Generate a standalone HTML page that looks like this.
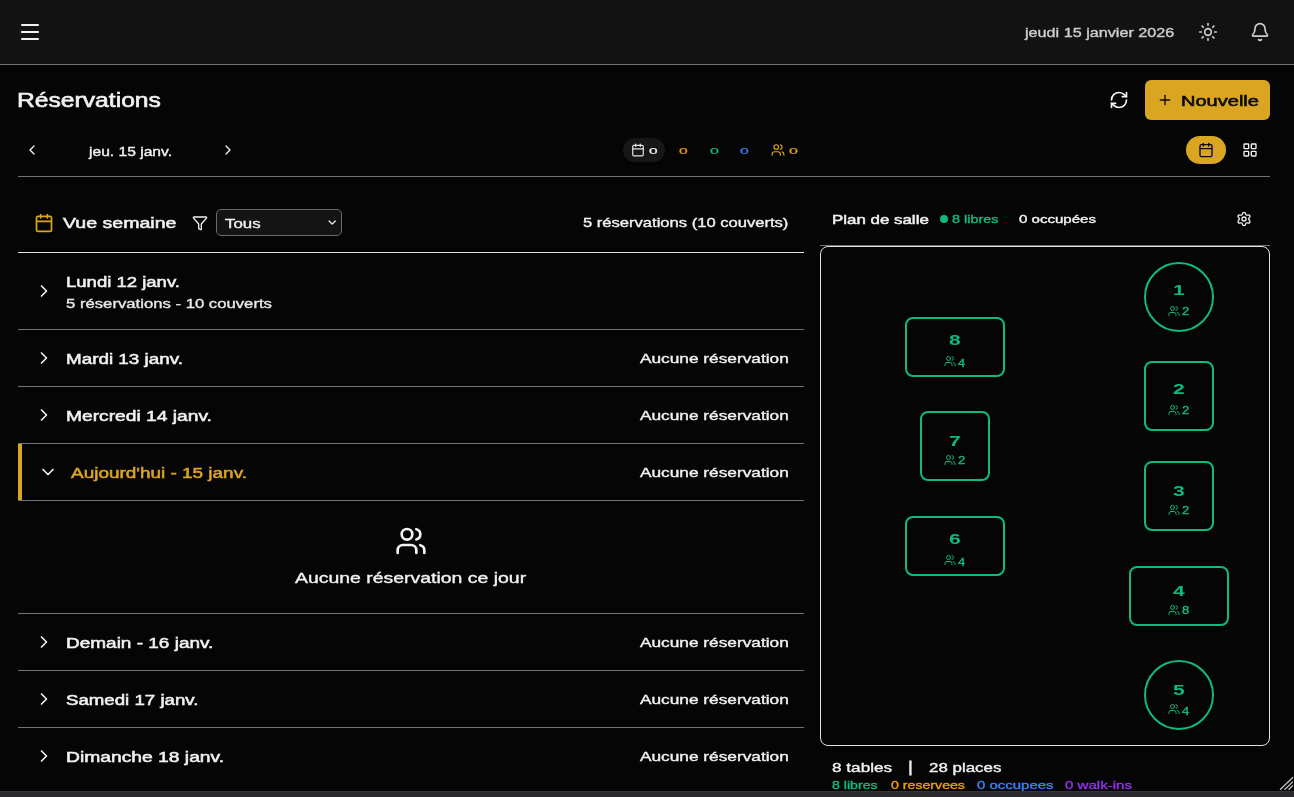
<!DOCTYPE html>
<html lang="fr"><head><meta charset="utf-8"><title>Réservations</title>
<style>html,body{margin:0;padding:0;background:#050505;}
body{width:1294px;height:797px;position:relative;overflow:hidden;font-family:"Liberation Sans", sans-serif;color:#f2f2f2;}
.layer{position:absolute;left:0;top:0;width:1294px;height:797px;margin:0;padding:0;will-change:transform;}
.ab,.t,.ic{position:absolute;}
.t{white-space:nowrap;line-height:1;display:block;transform-origin:0 50%;}
.hl{position:absolute;height:1px;background:#737373;}
.tb{position:absolute;box-sizing:border-box;border:2px solid #10B981;border-radius:8px;}
.tb.c{border-radius:50%;}
button,h1,h2,ul,li{all:unset;}
</style></head><body>
<header class="layer">
<div class="ab" style="left:0;top:0;width:1294px;height:64px;background:#121212"></div>
<div class="hl" style="left:0;top:64px;width:1294px;"></div>
<button><svg class="ic" style="left:18px;top:20px" width="24" height="24" viewBox="0 0 24 24" fill="none" stroke="#f2f2f2" stroke-width="2" stroke-linecap="round" stroke-linejoin="round"><path d="M4 5h16"/><path d="M4 12h16"/><path d="M4 19h16"/></svg></button>
<span class="t" id="hdate" style="font-size:13.5px;font-weight:400;color:#cecece;top:25.77px;left:1024.68px;transform:scaleX(1.1977);-webkit-text-stroke:0.38px #cecece;">jeudi 15 janvier 2026</span>
<button><svg class="ic" style="left:1198px;top:22px" width="20" height="20" viewBox="0 0 24 24" fill="none" stroke="#cfcfcf" stroke-width="2" stroke-linecap="round" stroke-linejoin="round"><circle cx="12" cy="12" r="4"/><path d="M12 2v2"/><path d="M12 20v2"/><path d="m4.93 4.93 1.41 1.41"/><path d="m17.66 17.66 1.41 1.41"/><path d="M2 12h2"/><path d="M20 12h2"/><path d="m6.34 17.66-1.41 1.41"/><path d="m19.07 4.93-1.41 1.41"/></svg></button>
<button><svg class="ic" style="left:1250px;top:22px" width="20" height="20" viewBox="0 0 24 24" fill="none" stroke="#cfcfcf" stroke-width="2" stroke-linecap="round" stroke-linejoin="round"><path d="M10.268 21a2 2 0 0 0 3.464 0"/><path d="M3.262 15.326A1 1 0 0 0 4 17h16a1 1 0 0 0 .74-1.673C19.41 13.956 18 12.499 18 8A6 6 0 0 0 6 8c0 4.499-1.411 5.956-2.738 7.326"/></svg></button>
</header>
<section class="layer">
<h1><span class="t" id="title" style="font-size:19.4px;font-weight:400;color:#f2f2f2;top:90.98px;left:17.16px;transform:scaleX(1.2718);-webkit-text-stroke:0.6px #f2f2f2;">Réservations</span></h1>
<button><svg class="ic" style="left:1109px;top:90px" width="20" height="20" viewBox="0 0 24 24" fill="none" stroke="#f2f2f2" stroke-width="2" stroke-linecap="round" stroke-linejoin="round"><path d="M3 12a9 9 0 0 1 9-9 9.75 9.75 0 0 1 6.74 2.74L21 8"/><path d="M21 3v5h-5"/><path d="M21 12a9 9 0 0 1-9 9 9.75 9.75 0 0 1-6.74-2.74L3 16"/><path d="M8 16H3v5"/></svg></button>
<button><div class="ab" style="left:1145px;top:80px;width:125px;height:40px;border-radius:6px;background:#DAA520"></div><svg class="ic" style="left:1157px;top:92px" width="16" height="16" viewBox="0 0 24 24" fill="none" stroke="#0a0a0a" stroke-width="2" stroke-linecap="round" stroke-linejoin="round"><path d="M5 12h14"/><path d="M12 5v14"/></svg><span class="t" id="nouv" style="font-size:15.5px;font-weight:400;color:#0a0a0a;top:92.68px;left:1180.74px;transform:scaleX(1.2924);-webkit-text-stroke:0.55px #0a0a0a;">Nouvelle</span></button>
</section>
<nav class="layer">
<button><svg class="ic" style="left:24px;top:142px" width="16" height="16" viewBox="0 0 24 24" fill="none" stroke="#f2f2f2" stroke-width="2" stroke-linecap="round" stroke-linejoin="round"><path d="m15 18-6-6 6-6"/></svg></button>
<span class="t" id="navd" style="font-size:13.5px;font-weight:400;color:#f2f2f2;top:145.37px;left:89.03px;transform:scaleX(1.1560);-webkit-text-stroke:0.38px #f2f2f2;">jeu. 15 janv.</span>
<button><svg class="ic" style="left:220px;top:142px" width="16" height="16" viewBox="0 0 24 24" fill="none" stroke="#f2f2f2" stroke-width="2" stroke-linecap="round" stroke-linejoin="round"><path d="m9 18 6-6-6-6"/></svg></button>
<div class="ab" style="left:623px;top:138px;width:42px;height:24px;border-radius:12px;background:#171717"></div>
<svg class="ic" style="left:631px;top:143px" width="14" height="14" viewBox="0 0 24 24" fill="none" stroke="#e6e6e6" stroke-width="2" stroke-linecap="round" stroke-linejoin="round"><path d="M8 2v4"/><path d="M16 2v4"/><rect width="18" height="18" x="3" y="4" rx="2"/><path d="M3 10h18"/></svg>
<span class="t" id="s0" style="font-size:8.5px;font-weight:400;color:#f2f2f2;top:147.10px;left:649.40px;transform:scaleX(1.8188);-webkit-text-stroke:0.2px #f2f2f2;">0</span>
<span class="t" id="s1" style="font-size:8.5px;font-weight:400;color:#F59E0B;top:147.10px;left:679.05px;transform:scaleX(1.8355);-webkit-text-stroke:0.2px #F59E0B;">0</span>
<span class="t" id="s2" style="font-size:8.5px;font-weight:400;color:#10B981;top:147.10px;left:709.62px;transform:scaleX(1.8813);-webkit-text-stroke:0.2px #10B981;">0</span>
<span class="t" id="s3" style="font-size:8.5px;font-weight:400;color:#3B82F6;top:147.10px;left:740.06px;transform:scaleX(1.8507);-webkit-text-stroke:0.2px #3B82F6;">0</span>
<svg class="ic" style="left:771px;top:143px" width="14" height="14" viewBox="0 0 24 24" fill="none" stroke="#DAA520" stroke-width="2" stroke-linecap="round" stroke-linejoin="round"><path d="M16 21v-2a4 4 0 0 0-4-4H6a4 4 0 0 0-4 4v2"/><path d="M16 3.128a4 4 0 0 1 0 7.744"/><path d="M22 21v-2a4 4 0 0 0-3-3.87"/><circle cx="9" cy="7" r="4"/></svg>
<span class="t" id="s4" style="font-size:8.5px;font-weight:400;color:#DAA520;top:147.10px;left:788.95px;transform:scaleX(1.8759);-webkit-text-stroke:0.2px #DAA520;">0</span>
<button><div class="ab" style="left:1186px;top:136px;width:40px;height:28px;border-radius:14px;background:#DAA520"></div><svg class="ic" style="left:1198px;top:142px" width="16" height="16" viewBox="0 0 24 24" fill="none" stroke="#0a0a0a" stroke-width="2" stroke-linecap="round" stroke-linejoin="round"><path d="M8 2v4"/><path d="M16 2v4"/><rect width="18" height="18" x="3" y="4" rx="2"/><path d="M3 10h18"/></svg></button>
<button><svg class="ic" style="left:1242px;top:142px" width="16" height="16" viewBox="0 0 24 24" fill="none" stroke="#f2f2f2" stroke-width="2" stroke-linecap="round" stroke-linejoin="round"><rect width="7" height="7" x="3" y="3" rx="1"/><rect width="7" height="7" x="14" y="3" rx="1"/><rect width="7" height="7" x="14" y="14" rx="1"/><rect width="7" height="7" x="3" y="14" rx="1"/></svg></button>
<div class="hl" style="left:18px;top:176px;width:1252px;"></div>
</nav>
<main class="layer">
<svg class="ic" style="left:34px;top:213px" width="20" height="20" viewBox="0 0 24 24" fill="none" stroke="#DAA520" stroke-width="2" stroke-linecap="round" stroke-linejoin="round"><path d="M8 2v4"/><path d="M16 2v4"/><rect width="18" height="18" x="3" y="4" rx="2"/><path d="M3 10h18"/></svg>
<h2><span class="t" id="vue" style="font-size:15.5px;font-weight:400;color:#f2f2f2;top:214.98px;left:63.10px;transform:scaleX(1.2624);-webkit-text-stroke:0.55px #f2f2f2;">Vue semaine</span></h2>
<svg class="ic" style="left:192px;top:215px" width="16" height="16" viewBox="0 0 24 24" fill="none" stroke="#f2f2f2" stroke-width="2" stroke-linecap="round" stroke-linejoin="round"><path d="M10 20a1 1 0 0 0 .553.895l2 1A1 1 0 0 0 14 21v-7a2 2 0 0 1 .517-1.341L21.74 4.67A1 1 0 0 0 21 3H3a1 1 0 0 0-.742 1.67l7.225 7.989A2 2 0 0 1 10 14z"/></svg>
<div class="ab" style="left:216px;top:209px;width:126px;height:27px;box-sizing:border-box;border:1px solid #6b6b6b;border-radius:5px;background:#141414"></div>
<span class="t" id="tous" style="font-size:13.5px;font-weight:400;color:#f2f2f2;top:216.67px;left:225.20px;transform:scaleX(1.2476);-webkit-text-stroke:0.35px #f2f2f2;">Tous</span>
<svg class="ic" style="left:327px;top:218px" width="10" height="10" viewBox="0 0 10 10" fill="none" stroke="#f2f2f2" stroke-width="1.3" stroke-linecap="round" stroke-linejoin="round"><path d="M2.1 3 5.2 6.1 8.3 3"/></svg>
<span class="t" id="cnt" style="font-size:13.5px;font-weight:400;color:#f2f2f2;top:215.87px;left:582.93px;transform:scaleX(1.2275);-webkit-text-stroke:0.38px #f2f2f2;">5 réservations (10 couverts)</span>
<div class="hl" style="left:18px;top:252px;width:786px;background:#e2e2e2"></div>
<ul>
<li><svg class="ic" style="left:34px;top:281px" width="20" height="20" viewBox="0 0 24 24" fill="none" stroke="#f2f2f2" stroke-width="2" stroke-linecap="round" stroke-linejoin="round"><path d="m9 18 6-6-6-6"/></svg><span class="t" id="d1" style="font-size:15.5px;font-weight:400;color:#f2f2f2;top:273.88px;left:65.86px;transform:scaleX(1.1947);-webkit-text-stroke:0.55px #f2f2f2;">Lundi 12 janv.</span><span class="t" id="d1s" style="font-size:13.5px;font-weight:400;color:#e8e8e8;top:296.57px;left:65.80px;transform:scaleX(1.2363);-webkit-text-stroke:0.38px #e8e8e8;">5 réservations - 10 couverts</span><div class="hl" style="left:18px;top:329px;width:786px;"></div></li>
<li><svg class="ic" style="left:34px;top:348px" width="20" height="20" viewBox="0 0 24 24" fill="none" stroke="#f2f2f2" stroke-width="2" stroke-linecap="round" stroke-linejoin="round"><path d="m9 18 6-6-6-6"/></svg><span class="t" id="d2" style="font-size:15.5px;font-weight:400;color:#f2f2f2;top:350.88px;left:65.83px;transform:scaleX(1.2152);-webkit-text-stroke:0.55px #f2f2f2;">Mardi 13 janv.</span><span class="t" id="none0" style="font-size:13.5px;font-weight:400;color:#f2f2f2;top:351.57px;left:639.50px;transform:scaleX(1.2788);-webkit-text-stroke:0.38px #f2f2f2;">Aucune réservation</span><div class="hl" style="left:18px;top:386px;width:786px;"></div></li>
<li><svg class="ic" style="left:34px;top:405px" width="20" height="20" viewBox="0 0 24 24" fill="none" stroke="#f2f2f2" stroke-width="2" stroke-linecap="round" stroke-linejoin="round"><path d="m9 18 6-6-6-6"/></svg><span class="t" id="d3" style="font-size:15.5px;font-weight:400;color:#f2f2f2;top:407.88px;left:65.79px;transform:scaleX(1.2394);-webkit-text-stroke:0.55px #f2f2f2;">Mercredi 14 janv.</span><span class="t" id="none1" style="font-size:13.5px;font-weight:400;color:#f2f2f2;top:408.57px;left:639.50px;transform:scaleX(1.2788);-webkit-text-stroke:0.38px #f2f2f2;">Aucune réservation</span><div class="hl" style="left:18px;top:443px;width:786px;"></div></li>
<li><div class="ab" style="left:18px;top:444px;width:4px;height:56px;background:#DAA520"></div><svg class="ic" style="left:38px;top:462px" width="20" height="20" viewBox="0 0 24 24" fill="none" stroke="#f2f2f2" stroke-width="2" stroke-linecap="round" stroke-linejoin="round"><path d="m6 9 6 6 6-6"/></svg><span class="t" id="d4" style="font-size:15.5px;font-weight:400;color:#DAA520;top:464.88px;left:70.80px;transform:scaleX(1.2221);-webkit-text-stroke:0.55px #DAA520;">Aujourd'hui - 15 janv.</span><span class="t" id="none2" style="font-size:13.5px;font-weight:400;color:#f2f2f2;top:465.57px;left:639.50px;transform:scaleX(1.2788);-webkit-text-stroke:0.38px #f2f2f2;">Aucune réservation</span><div class="hl" style="left:18px;top:500px;width:786px;"></div><svg class="ic" style="left:395px;top:525px" width="32" height="32" viewBox="0 0 24 24" fill="none" stroke="#f2f2f2" stroke-width="2" stroke-linecap="round" stroke-linejoin="round"><path d="M16 21v-2a4 4 0 0 0-4-4H6a4 4 0 0 0-4 4v2"/><path d="M16 3.128a4 4 0 0 1 0 7.744"/><path d="M22 21v-2a4 4 0 0 0-3-3.87"/><circle cx="9" cy="7" r="4"/></svg><span class="t" id="empty" style="font-size:15.5px;font-weight:400;color:#f2f2f2;top:569.68px;left:294.90px;transform:scaleX(1.2536);-webkit-text-stroke:0.38px #f2f2f2;">Aucune réservation ce jour</span><div class="hl" style="left:18px;top:613px;width:786px;"></div></li>
<li><svg class="ic" style="left:34px;top:632px" width="20" height="20" viewBox="0 0 24 24" fill="none" stroke="#f2f2f2" stroke-width="2" stroke-linecap="round" stroke-linejoin="round"><path d="m9 18 6-6-6-6"/></svg><span class="t" id="d5" style="font-size:15.5px;font-weight:400;color:#f2f2f2;top:634.88px;left:65.81px;transform:scaleX(1.2246);-webkit-text-stroke:0.55px #f2f2f2;">Demain - 16 janv.</span><span class="t" id="none3" style="font-size:13.5px;font-weight:400;color:#f2f2f2;top:635.57px;left:639.50px;transform:scaleX(1.2788);-webkit-text-stroke:0.38px #f2f2f2;">Aucune réservation</span><div class="hl" style="left:18px;top:670px;width:786px;"></div></li>
<li><svg class="ic" style="left:34px;top:689px" width="20" height="20" viewBox="0 0 24 24" fill="none" stroke="#f2f2f2" stroke-width="2" stroke-linecap="round" stroke-linejoin="round"><path d="m9 18 6-6-6-6"/></svg><span class="t" id="d6" style="font-size:15.5px;font-weight:400;color:#f2f2f2;top:691.88px;left:65.97px;transform:scaleX(1.2037);-webkit-text-stroke:0.55px #f2f2f2;">Samedi 17 janv.</span><span class="t" id="none4" style="font-size:13.5px;font-weight:400;color:#f2f2f2;top:692.57px;left:639.50px;transform:scaleX(1.2788);-webkit-text-stroke:0.38px #f2f2f2;">Aucune réservation</span><div class="hl" style="left:18px;top:727px;width:786px;"></div></li>
<li><svg class="ic" style="left:34px;top:746px" width="20" height="20" viewBox="0 0 24 24" fill="none" stroke="#f2f2f2" stroke-width="2" stroke-linecap="round" stroke-linejoin="round"><path d="m9 18 6-6-6-6"/></svg><span class="t" id="d7" style="font-size:15.5px;font-weight:400;color:#f2f2f2;top:748.88px;left:65.78px;transform:scaleX(1.2430);-webkit-text-stroke:0.55px #f2f2f2;">Dimanche 18 janv.</span><span class="t" id="none5" style="font-size:13.5px;font-weight:400;color:#f2f2f2;top:749.57px;left:639.50px;transform:scaleX(1.2788);-webkit-text-stroke:0.38px #f2f2f2;">Aucune réservation</span></li>
</ul>
</main>
<aside class="layer">
<h2><span class="t" id="plan" style="font-size:13.5px;font-weight:400;color:#f2f2f2;top:212.77px;left:831.54px;transform:scaleX(1.2520);-webkit-text-stroke:0.5px #f2f2f2;">Plan de salle</span></h2>
<div class="ab" style="left:940px;top:215px;width:8px;height:8px;border-radius:50%;background:#10B981"></div>
<span class="t" id="libres" style="font-size:11.6px;font-weight:400;color:#10B981;top:212.58px;left:952.26px;transform:scaleX(1.2414);-webkit-text-stroke:0.38px #10B981;">8 libres</span>
<span class="t" id="occ" style="font-size:11.6px;font-weight:400;color:#f2f2f2;top:212.58px;left:1018.73px;transform:scaleX(1.2977);-webkit-text-stroke:0.38px #f2f2f2;">0 occupées</span>
<button><svg class="ic" style="left:1236px;top:211px" width="16" height="16" viewBox="0 0 24 24" fill="none" stroke="#f2f2f2" stroke-width="2" stroke-linecap="round" stroke-linejoin="round"><path d="M9.671 4.136a2.34 2.34 0 0 1 4.659 0 2.34 2.34 0 0 0 3.319 1.915 2.34 2.34 0 0 1 2.33 4.033 2.34 2.34 0 0 0 0 3.831 2.34 2.34 0 0 1-2.33 4.033 2.34 2.34 0 0 0-3.319 1.915 2.34 2.34 0 0 1-4.659 0 2.34 2.34 0 0 0-3.32-1.915 2.34 2.34 0 0 1-2.33-4.033 2.34 2.34 0 0 0 0-3.831A2.34 2.34 0 0 1 6.35 6.051a2.34 2.34 0 0 0 3.319-1.915"/><circle cx="12" cy="12" r="3"/></svg></button>
<div class="hl" style="left:820px;top:245px;width:450px;"></div>
<div class="ab" style="left:820px;top:246px;width:450px;height:500px;box-sizing:border-box;border:1px solid #e2e2e2;border-radius:8px;"></div>
<div><div class="tb c" style="left:1144px;top:262px;width:70px;height:70px"></div><span class="t" id="tn1" style="font-size:14px;font-weight:700;color:#10B981;top:283.15px;left:1172.79px;transform:scaleX(1.5000);">1</span><svg class="ic" style="left:1167.5px;top:305.0px" width="12" height="12" viewBox="0 0 24 24" fill="none" stroke="#10B981" stroke-width="2" stroke-linecap="round" stroke-linejoin="round"><path d="M16 21v-2a4 4 0 0 0-4-4H6a4 4 0 0 0-4 4v2"/><path d="M16 3.128a4 4 0 0 1 0 7.744"/><path d="M22 21v-2a4 4 0 0 0-3-3.87"/><circle cx="9" cy="7" r="4"/></svg><span class="t" id="ts1" style="font-size:10px;font-weight:400;color:#10B981;top:306.84px;left:1181.97px;transform:scaleX(1.3000);-webkit-text-stroke:0.35px #10B981;">2</span></div>
<div><div class="tb" style="left:1144px;top:361px;width:70px;height:70px"></div><span class="t" id="tn2" style="font-size:14px;font-weight:700;color:#10B981;top:382.15px;left:1173.39px;transform:scaleX(1.5000);">2</span><svg class="ic" style="left:1167.5px;top:404.0px" width="12" height="12" viewBox="0 0 24 24" fill="none" stroke="#10B981" stroke-width="2" stroke-linecap="round" stroke-linejoin="round"><path d="M16 21v-2a4 4 0 0 0-4-4H6a4 4 0 0 0-4 4v2"/><path d="M16 3.128a4 4 0 0 1 0 7.744"/><path d="M22 21v-2a4 4 0 0 0-3-3.87"/><circle cx="9" cy="7" r="4"/></svg><span class="t" id="ts2" style="font-size:10px;font-weight:400;color:#10B981;top:405.84px;left:1181.97px;transform:scaleX(1.3000);-webkit-text-stroke:0.35px #10B981;">2</span></div>
<div><div class="tb" style="left:1144px;top:461px;width:70px;height:70px"></div><span class="t" id="tn3" style="font-size:14px;font-weight:700;color:#10B981;top:484.15px;left:1173.44px;transform:scaleX(1.5000);">3</span><svg class="ic" style="left:1167.5px;top:504.0px" width="12" height="12" viewBox="0 0 24 24" fill="none" stroke="#10B981" stroke-width="2" stroke-linecap="round" stroke-linejoin="round"><path d="M16 21v-2a4 4 0 0 0-4-4H6a4 4 0 0 0-4 4v2"/><path d="M16 3.128a4 4 0 0 1 0 7.744"/><path d="M22 21v-2a4 4 0 0 0-3-3.87"/><circle cx="9" cy="7" r="4"/></svg><span class="t" id="ts3" style="font-size:10px;font-weight:400;color:#10B981;top:505.83px;left:1181.97px;transform:scaleX(1.3000);-webkit-text-stroke:0.35px #10B981;">2</span></div>
<div><div class="tb" style="left:1129px;top:566px;width:100px;height:60px"></div><span class="t" id="tn4" style="font-size:14px;font-weight:700;color:#10B981;top:584.15px;left:1173.10px;transform:scaleX(1.5000);">4</span><svg class="ic" style="left:1167.5px;top:604.0px" width="12" height="12" viewBox="0 0 24 24" fill="none" stroke="#10B981" stroke-width="2" stroke-linecap="round" stroke-linejoin="round"><path d="M16 21v-2a4 4 0 0 0-4-4H6a4 4 0 0 0-4 4v2"/><path d="M16 3.128a4 4 0 0 1 0 7.744"/><path d="M22 21v-2a4 4 0 0 0-3-3.87"/><circle cx="9" cy="7" r="4"/></svg><span class="t" id="ts4" style="font-size:10px;font-weight:400;color:#10B981;top:605.83px;left:1181.97px;transform:scaleX(1.3000);-webkit-text-stroke:0.35px #10B981;">8</span></div>
<div><div class="tb c" style="left:1144px;top:660px;width:70px;height:70px"></div><span class="t" id="tn5" style="font-size:14px;font-weight:700;color:#10B981;top:683.15px;left:1172.96px;transform:scaleX(1.5000);">5</span><svg class="ic" style="left:1167.5px;top:703.0px" width="12" height="12" viewBox="0 0 24 24" fill="none" stroke="#10B981" stroke-width="2" stroke-linecap="round" stroke-linejoin="round"><path d="M16 21v-2a4 4 0 0 0-4-4H6a4 4 0 0 0-4 4v2"/><path d="M16 3.128a4 4 0 0 1 0 7.744"/><path d="M22 21v-2a4 4 0 0 0-3-3.87"/><circle cx="9" cy="7" r="4"/></svg><span class="t" id="ts5" style="font-size:10px;font-weight:400;color:#10B981;top:706.83px;left:1182.07px;transform:scaleX(1.3000);-webkit-text-stroke:0.35px #10B981;">4</span></div>
<div><div class="tb" style="left:905px;top:516px;width:100px;height:60px"></div><span class="t" id="tn6" style="font-size:14px;font-weight:700;color:#10B981;top:532.15px;left:949.03px;transform:scaleX(1.5000);">6</span><svg class="ic" style="left:943.5px;top:554.0px" width="12" height="12" viewBox="0 0 24 24" fill="none" stroke="#10B981" stroke-width="2" stroke-linecap="round" stroke-linejoin="round"><path d="M16 21v-2a4 4 0 0 0-4-4H6a4 4 0 0 0-4 4v2"/><path d="M16 3.128a4 4 0 0 1 0 7.744"/><path d="M22 21v-2a4 4 0 0 0-3-3.87"/><circle cx="9" cy="7" r="4"/></svg><span class="t" id="ts6" style="font-size:10px;font-weight:400;color:#10B981;top:557.83px;left:958.07px;transform:scaleX(1.3000);-webkit-text-stroke:0.35px #10B981;">4</span></div>
<div><div class="tb" style="left:920px;top:411px;width:70px;height:70px"></div><span class="t" id="tn7" style="font-size:14px;font-weight:700;color:#10B981;top:434.15px;left:949.14px;transform:scaleX(1.5000);">7</span><svg class="ic" style="left:943.5px;top:454.0px" width="12" height="12" viewBox="0 0 24 24" fill="none" stroke="#10B981" stroke-width="2" stroke-linecap="round" stroke-linejoin="round"><path d="M16 21v-2a4 4 0 0 0-4-4H6a4 4 0 0 0-4 4v2"/><path d="M16 3.128a4 4 0 0 1 0 7.744"/><path d="M22 21v-2a4 4 0 0 0-3-3.87"/><circle cx="9" cy="7" r="4"/></svg><span class="t" id="ts7" style="font-size:10px;font-weight:400;color:#10B981;top:455.84px;left:957.97px;transform:scaleX(1.3000);-webkit-text-stroke:0.35px #10B981;">2</span></div>
<div><div class="tb" style="left:905px;top:317px;width:100px;height:60px"></div><span class="t" id="tn8" style="font-size:14px;font-weight:700;color:#10B981;top:333.15px;left:949.00px;transform:scaleX(1.5000);">8</span><svg class="ic" style="left:943.5px;top:355.0px" width="12" height="12" viewBox="0 0 24 24" fill="none" stroke="#10B981" stroke-width="2" stroke-linecap="round" stroke-linejoin="round"><path d="M16 21v-2a4 4 0 0 0-4-4H6a4 4 0 0 0-4 4v2"/><path d="M16 3.128a4 4 0 0 1 0 7.744"/><path d="M22 21v-2a4 4 0 0 0-3-3.87"/><circle cx="9" cy="7" r="4"/></svg><span class="t" id="ts8" style="font-size:10px;font-weight:400;color:#10B981;top:358.84px;left:958.07px;transform:scaleX(1.3000);-webkit-text-stroke:0.35px #10B981;">4</span></div>
<span class="t" id="ft1" style="font-size:13.5px;font-weight:400;color:#f2f2f2;top:761.27px;left:831.88px;transform:scaleX(1.2717);-webkit-text-stroke:0.38px #f2f2f2;">8 tables</span>
<span class="t" id="ftb" style="font-size:15px;font-weight:400;color:#f2f2f2;top:759.00px;left:908.60px;transform:scaleX(1.0000);-webkit-text-stroke:0.9px #f2f2f2;">|</span>
<span class="t" id="ft2" style="font-size:13.5px;font-weight:400;color:#f2f2f2;top:761.27px;left:929.46px;transform:scaleX(1.2528);-webkit-text-stroke:0.38px #f2f2f2;">28 places</span>
<span class="t" id="lg1" style="font-size:11.6px;font-weight:400;color:#10B981;top:779.48px;left:831.92px;transform:scaleX(1.2208);-webkit-text-stroke:0.35px #10B981;">8 libres</span>
<span class="t" id="lg2" style="font-size:11.6px;font-weight:400;color:#F59E0B;top:779.48px;left:890.90px;transform:scaleX(1.2208);-webkit-text-stroke:0.35px #F59E0B;">0 reservees</span>
<span class="t" id="lg3" style="font-size:11.6px;font-weight:400;color:#3B82F6;top:779.48px;left:977.10px;transform:scaleX(1.2902);-webkit-text-stroke:0.35px #3B82F6;">0 occupees</span>
<span class="t" id="lg4" style="font-size:11.6px;font-weight:400;color:#9333EA;top:779.48px;left:1065.16px;transform:scaleX(1.2983);-webkit-text-stroke:0.35px #9333EA;">0 walk-ins</span>
<svg class="ic" style="left:1279px;top:776px" width="15" height="15" viewBox="0 0 15 15" fill="none" stroke="#c4c4c4" stroke-width="1.3"><path d="M1 13.8 14 1.3M5.5 13.8 14 5.6M9.6 13.8 14 9.4"/></svg>
</aside>
<div class="ab" style="left:0;top:791px;width:1294px;height:6px;background:#2b2b2d;border-top:1px solid #343436;box-sizing:border-box"></div>
</body></html>
